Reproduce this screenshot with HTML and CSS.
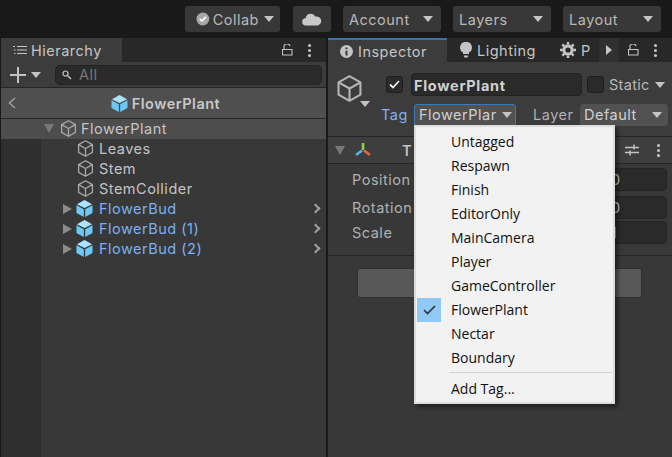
FILE: index.html
```html
<!DOCTYPE html>
<html lang="en">

<head>
    <meta charset="UTF-8">
    <title>Inspector - Tag menu</title>
    <link rel="stylesheet" href="styles.css">
</head>

<body>
    <svg class="defs" width="0" height="0">
        <symbol id="cube" viewBox="2 1 16 18">
            <path d="M10 1.800 17.300 5.900V14.100L10 18.200 2.700 14.100V5.900ZM2.700 5.900 10 10 17.300 5.900M10 10V18.200" fill="none" stroke="currentColor" stroke-width="1.400" stroke-linejoin="round"/>
        </symbol>
        <symbol id="prefab" viewBox="1 1 18 18">
            <path d="M10 1 18 5.400 10 9.600 2 5.400Z" fill="#a9e4ff"/>
            <path d="M1.500 6.600 9.300 10.800V19L1.500 14.700Z" fill="#6cc8f5"/>
            <path d="M18.500 6.600 10.700 10.800V19L18.500 14.700Z" fill="#6cc8f5"/>
        </symbol>
    </svg>

    <div class="top-bar">
        <div class="tool-btn collab-btn">
            <svg class="collab-icon" width="16" height="16" viewBox="0 0 16 16"><circle cx="8" cy="8" r="7.500" fill="#a8a8a8"/><path d="M4.500 8 7 10.500 11.500 5.500" fill="none" stroke="#fff" stroke-width="2"/></svg>
            Collab<span class="arrow"></span>
        </div>
        <div class="tool-btn cloud-btn">
            <svg width="20" height="13" viewBox="0 0 20 13"><path d="M4 12.500a3.600 3.600 0 0 1-.4-7.200A5.200 5.200 0 0 1 13.400 3.600 4.500 4.500 0 0 1 15.800 12.500Z" fill="#c8c8c8"/></svg>
        </div>
        <div class="tool-btn wide-btn">Account<span class="arrow"></span></div>
        <div class="tool-btn wide-btn">Layers<span class="arrow"></span></div>
        <div class="tool-btn wide-btn">Layout<span class="arrow"></span></div>
    </div>

    <div class="panels">
        <div class="hierarchy">
            <div class="tab-bar">
                <div class="tab hierarchy-tab">
                    <svg width="14" height="10" viewBox="0 0 14 10"><path d="M4 1.500H14M4 5H14M4 8.500H14M0 1.500H2M1 5H2.500M1 8.500H2.500" stroke="#c4c4c4" stroke-width="1.200" fill="none"/></svg>
                    Hierarchy
                </div>
                <div class="tab-tools">
                    <svg class="lock" width="11" height="12" viewBox="0 0 11 12"><path d="M2 5V3a3 2.500 0 0 1 6-1M.5 5.500H10V11H.5Z" fill="none" stroke="#c4c4c4" stroke-width="1.100"/></svg>
                    <span class="dots"></span>
                </div>
            </div>
            <div class="hier-tools">
                <svg width="16" height="16" viewBox="0 0 16 16"><path d="M8 0V16M0 8H16" stroke="#c4c4c4" stroke-width="2"/></svg>
                <span class="arrow"></span>
                <div class="search">
                    <svg width="11" height="10" viewBox="0 0 11 10"><circle cx="3.500" cy="3.500" r="2.500" fill="none" stroke="#c4c4c4" stroke-width="1.200"/><path d="M5.500 5.500 9 9" stroke="#c4c4c4" stroke-width="1.400"/></svg>
                    All
                </div>
            </div>
            <div class="crumb">
                <svg class="crumb-back" width="8" height="12" viewBox="0 0 8 12"><path d="M7 1 1.500 6 7 11" fill="none" stroke="#a0a0a0" stroke-width="1.500"/></svg>
                <svg class="icon" width="17" height="17"><use href="#prefab"/></svg>
                FlowerPlant
            </div>
            <div class="tree">
                <div class="gutter"></div>
                <div class="rows">
                    <div class="row row-root"><span class="fold fold-open"></span><svg class="icon" width="17" height="17"><use href="#cube"/></svg>FlowerPlant</div>
                    <div class="row row-child"><svg class="icon" width="17" height="17"><use href="#cube"/></svg>Leaves</div>
                    <div class="row row-child"><svg class="icon" width="17" height="17"><use href="#cube"/></svg>Stem</div>
                    <div class="row row-child"><svg class="icon" width="17" height="17"><use href="#cube"/></svg>StemCollider</div>
                    <div class="row row-prefab"><span class="fold"></span><svg class="icon" width="17" height="17"><use href="#prefab"/></svg>FlowerBud<span class="chevron"></span></div>
                    <div class="row row-prefab"><span class="fold"></span><svg class="icon" width="17" height="17"><use href="#prefab"/></svg>FlowerBud (1)<span class="chevron"></span></div>
                    <div class="row row-prefab"><span class="fold"></span><svg class="icon" width="17" height="17"><use href="#prefab"/></svg>FlowerBud (2)<span class="chevron"></span></div>
                </div>
            </div>
        </div>

        <div class="inspector">
            <div class="tab-bar">
                <div class="tab inspector-tab">
                    <svg width="13" height="13" viewBox="0 0 15 15"><circle cx="7.500" cy="7.500" r="7.500" fill="#c4c4c4"/><path d="M7.500 3V4.800M7.500 6.500V12" stroke="#333" stroke-width="2.200"/></svg>
                    Inspector
                </div>
                <div class="tab-plain lighting-tab">
                    <svg width="12" height="16" viewBox="0 0 12 16"><path d="M6 0a5.600 5.600 0 0 1 3 10.500V12H3V10.500A5.600 5.600 0 0 1 6 0ZM3.500 13.500H8.500L7.500 15.500H4.500Z" fill="#c4c4c4"/></svg>
                    Lighting
                </div>
                <div class="tab-plain project-tab">
                    <svg width="16" height="16" viewBox="0 0 16 16"><circle cx="8" cy="8" r="4.200" fill="none" stroke="#c4c4c4" stroke-width="3.200"/><path d="M8 0V16M0 8H16M2.300 2.300 13.700 13.700M13.700 2.300 2.300 13.700" stroke="#c4c4c4" stroke-width="2.400" stroke-dasharray="2.600 10.800"/></svg>
                    P
                </div>
                <div class="more-tabs"><span class="more-arrow"></span></div>
                <div class="tab-tools">
                    <svg class="lock" width="11" height="12" viewBox="0 0 11 12"><path d="M2 5V3a3 2.500 0 0 1 6-1M.5 5.500H10V11H.5Z" fill="none" stroke="#c4c4c4" stroke-width="1.100"/></svg>
                    <span class="dots"></span>
                </div>
            </div>

            <div class="object-head">
                <div class="object-icon">
                    <svg class="big-cube" width="25" height="27"><use href="#cube"/></svg>
                    <span class="arrow"></span>
                </div>
                <div class="object-fields">
                    <div class="head-line">
                        <span class="check"><svg width="11" height="9" viewBox="0 0 11 9"><path d="M1 4.500 4 7.500 10 1" fill="none" stroke="#eee" stroke-width="1.800"/></svg></span>
                        <div class="name-field">FlowerPlant</div>
                        <span class="check"></span>
                        <span class="static-label">Static<span class="arrow"></span></span>
                    </div>
                    <div class="head-line tag-line">
                        <span class="tag-label">Tag</span>
                        <div class="dropdown tag-drop"><span class="drop-text">FlowerPlar</span><span class="arrow"></span></div>
                        <span class="layer-label">Layer</span>
                        <div class="dropdown layer-drop">Default<span class="arrow"></span></div>
                    </div>
                </div>
            </div>

            <div class="comp-head">
                <span class="fold fold-open"></span>
                <svg width="18" height="16" viewBox="0 0 18 16"><path d="M9 1V8" stroke="#8fd14f" stroke-width="2.600"/><path d="M8 8.500 2 13" stroke="#4fb3e8" stroke-width="2.600"/><path d="M10 8.500 16 13" stroke="#e8673c" stroke-width="2.600"/></svg>
                <span class="comp-title">T</span>
                <svg class="sliders" width="14" height="14" viewBox="0 0 14 14"><path d="M0 4.500H14M0 9.500H14M9 1.500V6.500M5 7.500V12.500" stroke="#c4c4c4" stroke-width="1.500"/></svg>
                <span class="dots"></span>
            </div>

            <div class="comp-body">
                <div class="prop prop-pos"><span class="prop-label">Position</span><div class="num-field">0</div></div>
                <div class="prop prop-rot"><span class="prop-label">Rotation</span><div class="num-field">0</div></div>
                <div class="prop prop-scale"><span class="prop-label">Scale</span><div class="num-field">1</div></div>
            </div>

            <div class="add-wrap"><div class="add-btn"></div></div>
        </div>
    </div>

    <!-- tag popup -->
    <ul class="tag-menu">
        <li>Untagged</li>
        <li>Respawn</li>
        <li>Finish</li>
        <li>EditorOnly</li>
        <li>MainCamera</li>
        <li>Player</li>
        <li>GameController</li>
        <li class="checked"><span class="tick"><svg width="13" height="10" viewBox="0 0 13 10"><path d="M1 5 4.500 8.500 12 1" fill="none" stroke="#333" stroke-width="1.700"/></svg></span>FlowerPlant</li>
        <li>Nectar</li>
        <li>Boundary</li>
        <li class="sep"></li>
        <li>Add Tag...</li>
    </ul>
</body>

</html>
```

FILE: styles.css
```css
* {
    box-sizing: border-box;
}

html,
body {
    width: 672px;
    height: 457px;
    overflow: hidden;
}

body {
    margin: 0;
    background-color: #191919;
    font-family: Inter, 'Liberation Sans', sans-serif;
    font-size: 14.5px;
    letter-spacing: 0.5px;
    color: #c4c4c4;
    position: relative;
}

.defs {
    position: absolute;
}

.arrow {
    display: inline-block;
    flex: none;
    width: 0;
    height: 0;
    border-left: 5px solid transparent;
    border-right: 5px solid transparent;
    border-top: 6px solid #c4c4c4;
}

/* top toolbar */
.top-bar {
    display: flex;
    justify-content: flex-end;
    align-items: center;
    height: 38px;
    padding-right: 11px;
}

.tool-btn {
    display: flex;
    align-items: center;
    height: 26px;
    margin-left: 12px;
    border-radius: 3px;
    background-color: #383838;
    padding: 0 6px;
    color: #b8b8b8;
}

.wide-btn {
    width: 98px;
    justify-content: space-between;
    padding: 0 8px 0 6px;
}

.collab-btn {
    width: 95px;
    margin-right: 1px;
    padding: 0 6px 0 11px;
}

.collab-icon {
    margin-right: 3px;
}

.collab-btn .arrow {
    margin-left: 5px;
}

.cloud-btn {
    width: 38px;
    justify-content: center;
}

/* panels */
.panels {
    display: flex;
    height: 419px;
    padding-left: 1px;
    column-gap: 2px;
}

.hierarchy {
    display: flex;
    flex-direction: column;
    width: 325px;
}

.inspector {
    display: flex;
    flex-direction: column;
    width: 344px;
    background-color: #383838;
}

.tab-bar {
    display: flex;
    align-items: stretch;
    height: 24px;
    background-color: #282828;
    position: relative;
}

.tab {
    display: flex;
    align-items: center;
    background-color: #3c3c3c;
    column-gap: 6px;
}

.hierarchy-tab {
    width: 121px;
    padding-left: 12px;
    column-gap: 4px;
}

.inspector-tab {
    width: 119px;
    padding-left: 12px;
    column-gap: 5px;
    border-top: 2px solid #3a72b0;
}

.tab-plain {
    display: flex;
    align-items: center;
    column-gap: 5px;
}

.lighting-tab {
    width: 111px;
    padding-left: 13px;
}

.project-tab {
    width: 41px;
    padding-left: 2px;
}

.more-tabs {
    display: flex;
    align-items: center;
    justify-content: center;
    width: 20px;
    background-color: #303030;
}

.more-arrow {
    border-top: 5px solid transparent;
    border-bottom: 5px solid transparent;
    border-left: 6px solid #c4c4c4;
}

.tab-tools {
    display: flex;
    align-items: center;
    margin-left: auto;
    column-gap: 15px;
    padding-right: 15px;
}

.dots {
    display: inline-block;
    width: 3px;
    height: 3px;
    border-radius: 50%;
    background-color: #c4c4c4;
    box-shadow: 0 -5px 0 #c4c4c4, 0 5px 0 #c4c4c4;
}

/* hierarchy */
.hier-tools {
    display: flex;
    align-items: center;
    height: 26px;
    padding-left: 9px;
    background-color: #3c3c3c;
    border-bottom: 1px solid #262626;
}

.hier-tools .arrow {
    margin-left: 5px;
}

.search {
    display: flex;
    align-items: center;
    width: 267px;
    height: 20px;
    margin-left: 14px;
    padding-left: 6px;
    column-gap: 6px;
    border-radius: 5px;
    border: 1px solid #222;
    background-color: #2a2a2a;
    color: #777;
}

.crumb {
    display: flex;
    align-items: center;
    justify-content: center;
    height: 31px;
    padding-left: 4px;
    column-gap: 4px;
    background-color: #4f4f4f;
    border-bottom: 1px solid #262626;
    font-weight: 600;
    color: #c8c8c8;
    position: relative;
}

.crumb-back {
    position: absolute;
    left: 7px;
    top: 9px;
}

.tree {
    display: flex;
    flex: 1;
}

.gutter {
    width: 40px;
    background-color: #2f2f2f;
}

.rows {
    flex: 1;
    background-color: #383838;
}

.row {
    display: flex;
    align-items: center;
    height: 20px;
    padding-bottom: 1px;
    column-gap: 5px;
    color: #c4c4c4;
}

.row svg {
    color: #a8a8a8;
    flex: none;
}

.row-root {
    background-color: #4d4d4d;
    padding-left: 3px;
    column-gap: 4px;
    box-shadow: -40px 0 0 #4d4d4d;
}

.row-child {
    padding-left: 36px;
}

.row-prefab {
    padding-left: 22px;
    column-gap: 4px;
    color: #7cb0f0;
}

.fold {
    display: inline-block;
    width: 0;
    height: 0;
    margin-right: 0;
    border-top: 5px solid transparent;
    border-bottom: 5px solid transparent;
    border-left: 9px solid #8a8a8a;
}

.fold-open {
    border-left: 5px solid transparent;
    border-right: 5px solid transparent;
    border-top: 9px solid #777;
    border-bottom: 0;
    margin-right: 2px;
}

.row-prefab .icon {
    margin-right: 2px;
}

.chevron {
    width: 7px;
    height: 7px;
    margin-left: auto;
    margin-right: 7px;
    border-top: 2px solid #a0a0a0;
    border-right: 2px solid #a0a0a0;
    transform: rotate(45deg);
}

/* inspector head */
.object-head {
    display: flex;
    height: 75px;
    background-color: #3c3c3c;
    border-bottom: 1px solid #262626;
}

.object-icon {
    display: flex;
    align-items: flex-start;
    width: 53px;
    padding: 13px 0 0 9px;
    position: relative;
}

.big-cube {
    color: #b4b4b4;
}

.object-icon .arrow {
    position: absolute;
    left: 32px;
    top: 39px;
}

.object-fields {
    display: flex;
    flex-direction: column;
    padding-top: 11px;
    row-gap: 7px;
}

.head-line {
    display: flex;
    align-items: center;
    height: 23px;
}

.check {
    display: flex;
    align-items: center;
    justify-content: center;
    width: 17px;
    height: 17px;
    margin: 0 0 0 5px;
    border-radius: 3px;
    border: 1px solid #1f1f1f;
    background-color: #2a2a2a;
}

.name-field {
    display: flex;
    align-items: center;
    width: 171px;
    height: 23px;
    margin: 0 0 0 8px;
    padding: 1px 0 0 2px;
    border-radius: 4px;
    border: 1px solid #222;
    background-color: #2a2a2a;
    font-weight: 700;
    letter-spacing: 0.7px;
    color: #d0d0d0;
}

.static-label {
    display: flex;
    align-items: center;
    margin-left: 5px;
    column-gap: 5px;
    letter-spacing: 0.3px;
    color: #b8b8b8;
}

.tag-label {
    width: 33px;
    color: #7cb0f0;
}

.dropdown {
    display: flex;
    align-items: center;
    height: 22px;
    border-radius: 3px;
    background-color: #515151;
    color: #d0d0d0;
}

.tag-drop {
    width: 102px;
    padding-left: 4px;
    border: 1px solid #3a79bb;
}

.drop-text {
    width: 81px;
    white-space: nowrap;
}

.tag-drop .arrow {
    margin-left: 2px;
}

.layer-label {
    width: 47px;
    margin-left: 17px;
    color: #b0b0b0;
}

.layer-drop {
    justify-content: space-between;
    width: 88px;
    padding: 0 6px 0 4px;
}

/* transform */
.comp-head {
    display: flex;
    align-items: center;
    height: 27px;
    padding-left: 7px;
    background-color: #3e3e3e;
    border-bottom: 1px solid #262626;
    column-gap: 7px;
}

.comp-title {
    margin-left: 23px;
    font-weight: 600;
}

.sliders {
    margin-left: auto;
}

.comp-head .dots {
    margin: 0 12px 0 11px;
}

.comp-body {
    display: flex;
    flex-direction: column;
    height: 92px;
    padding: 4px 5px 0 24px;
    border-bottom: 1px solid #262626;
}

.prop {
    display: flex;
    align-items: center;
    justify-content: space-between;
    height: 23px;
    margin-bottom: 5px;
}

.prop-scale {
    margin-top: -3px;
}

.prop-label {
    color: #b0b0b0;
}

.num-field {
    display: flex;
    align-items: center;
    width: 62px;
    height: 23px;
    padding-left: 5px;
    border-radius: 4px;
    border: 1px solid #242424;
    background-color: #2a2a2a;
}

.add-wrap {
    padding: 12px 30px 0 29px;
}

.add-btn {
    height: 30px;
    border-radius: 3px;
    border: 1px solid #303030;
    background-color: #585858;
}

/* popup */
.tag-menu {
    position: absolute;
    left: 414px;
    top: 125px;
    width: 201px;
    height: 279px;
    margin: 0;
    padding: 3px 0 0 0;
    list-style: none;
    background-color: #f2f2f2;
    border: 2px solid #dcdcdc;
    box-shadow: 3px 3px 4px rgba(0, 0, 0, 0.45);
    font-family: 'Open Sans', 'Noto Sans', sans-serif;
    font-size: 14px;
    letter-spacing: 0;
    color: #111;
}

.tag-menu li {
    display: flex;
    align-items: center;
    position: relative;
    height: 24px;
    padding: 0 0 1px 35px;
}

.tag-menu .sep {
    height: 1px;
    margin: 2px 1px 4px 33px;
    padding: 0;
    background-color: #d4d4d4;
}

.tick {
    display: flex;
    align-items: center;
    justify-content: center;
    position: absolute;
    left: 1px;
    top: 0;
    width: 24px;
    height: 24px;
    background-color: #90c8f6;
}
```
